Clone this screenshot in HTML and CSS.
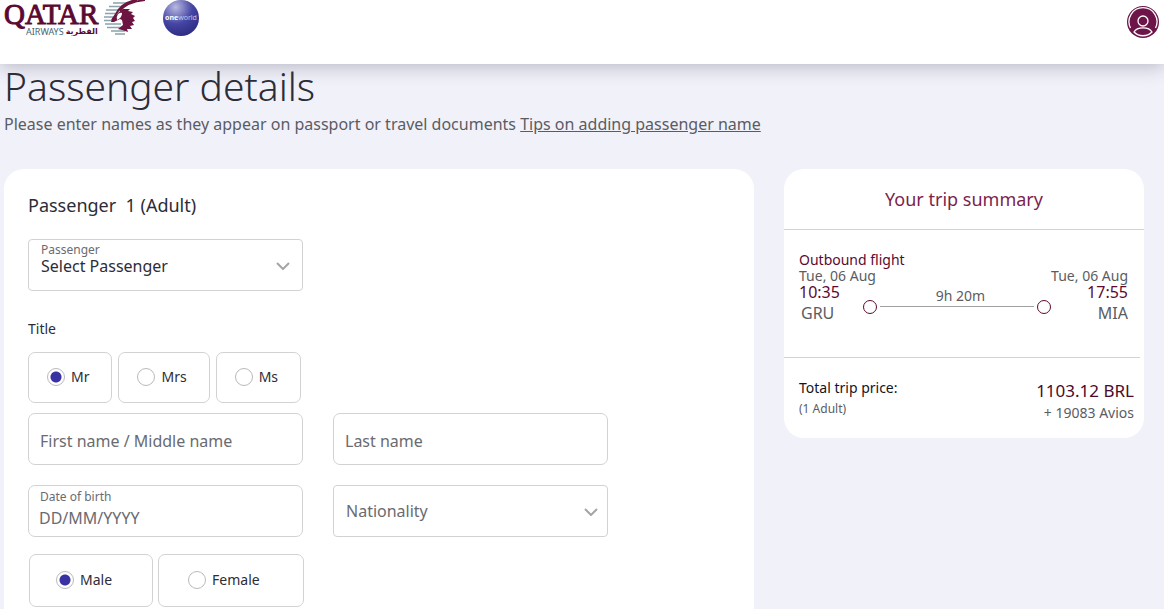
FILE: index.html
```html
<!DOCTYPE html>
<html lang="en">
<head>
    <meta charset="UTF-8">
    <meta name="viewport" content="width=device-width, initial-scale=1.0">
    <title>Passenger details</title>
    <link rel="stylesheet" href="styles.css">
</head>
<body>
    <header class="header">
        <a class="brand" href="#">
            <span class="brand-text">
                <span class="brand-name">QATAR</span>
                <span class="brand-sub"><span>AIRWAYS</span><span class="brand-arabic" lang="ar">القطرية</span></span>
            </span>
            <svg class="oryx" width="44" height="36" viewBox="0 0 44 36" aria-hidden="true">
                <path d="M12 3h15M8 6.500h14M5 10h13M4 13.500h11M3 17h9M3 20.500h10M4 24h16M6 27.500h16M10 31h14M14 34h10" stroke="#8ba3ac" stroke-width="1.500" fill="none"/>
                <path d="M18 12L22 9L29 9L27 11L32 12L30 14L34 16L32 18L34 21L31 22L33 25L29 26L31 29L26 29L27 32L21 30L17 29L22 25L21 20L19 19L13 22L10 22L11 19Z" fill="#6b1540"/>
                <path d="M17 14Q20 12 21 13Q21 18 16 20Q15 17 17 14Z" fill="#fff"/>
                <path d="M44 0C34 1 24 4 19 11M36 0C27 1 19 6 15 14L11 20" stroke="#6b1540" stroke-width="1.800" fill="none"/>
            </svg>
        </a>
        <a class="oneworld" href="#"><b>one</b>world</a>
        <button class="profile" type="button" aria-label="Profile">
            <svg width="32" height="32" viewBox="0 0 32 32" aria-hidden="true">
                <circle cx="16" cy="16" r="16" fill="#6d1548"/>
                <g fill="none" stroke="#fff" stroke-width="1.300">
                    <path d="M3.500 22A14 14 0 1 1 28.500 22"/>
                    <circle cx="16" cy="15" r="5"/>
                    <path d="M7 26C10 20.500 22 20.500 25 26C20 31 12 31 7 26Z"/>
                </g>
            </svg>
        </button>
    </header>

    <main class="page">
        <h1>Passenger details</h1>
        <p class="intro">Please enter names as they appear on passport or travel documents <a href="#">Tips on adding passenger name</a></p>

        <div class="columns">
            <form class="card passenger">
                <h2>Passenger&nbsp; 1 (Adult)</h2>
                <div class="fields">
                    <div class="field field-select">
                        <label for="passenger">Passenger</label>
                        <select id="passenger">
                            <option>Select Passenger</option>
                        </select>
                        <svg class="chevron" width="14" height="8" viewBox="0 0 14 8" aria-hidden="true"><path d="M1 1l6 6 6-6"/></svg>
                    </div>
                </div>

                <fieldset class="choices titles">
                    <legend>Title</legend>
                    <label><input type="radio" name="title" checked>Mr</label>
                    <label><input type="radio" name="title">Mrs</label>
                    <label><input type="radio" name="title">Ms</label>
                </fieldset>

                <div class="fields">
                    <div class="field">
                        <input type="text" id="first" placeholder="First name / Middle name" aria-label="First name / Middle name">
                    </div>
                    <div class="field">
                        <input type="text" id="last" placeholder="Last name" aria-label="Last name">
                    </div>
                    <div class="field field-date">
                        <label for="dob">Date of birth</label>
                        <input type="text" id="dob" placeholder="DD/MM/YYYY">
                    </div>
                    <div class="field field-select nationality">
                        <select id="nationality" aria-label="Nationality">
                            <option>Nationality</option>
                        </select>
                        <svg class="chevron" width="14" height="8" viewBox="0 0 14 8" aria-hidden="true"><path d="M1 1l6 6 6-6"/></svg>
                    </div>
                </div>

                <fieldset class="choices gender" aria-label="Gender">
                    <label><input type="radio" name="gender" checked>Male</label>
                    <label><input type="radio" name="gender">Female</label>
                </fieldset>
            </form>

            <aside class="card summary">
                <h2>Your trip summary</h2>
                <section class="flight">
                    <h3>Outbound flight</h3>
                    <div class="route">
                        <div class="stop">
                            <span>Tue, 06 Aug</span>
                            <span class="time">10:35</span>
                            <span class="airport">GRU</span>
                        </div>
                        <div class="leg">
                            <span class="duration">9h 20m</span>
                            <span class="line"></span>
                        </div>
                        <div class="stop arrival">
                            <span>Tue, 06 Aug</span>
                            <span class="time">17:55</span>
                            <span class="airport">MIA</span>
                        </div>
                    </div>
                </section>
                <section class="total">
                    <div>
                        <div class="total-label">Total trip price:</div>
                        <div class="adults">(1 Adult)</div>
                    </div>
                    <div class="amount">
                        <div class="price">1103.12 BRL</div>
                        <div class="avios">+ 19083 Avios</div>
                    </div>
                </section>
            </aside>
        </div>
    </main>
</body>
</html>
```
FILE: styles.css
```css
* {
    box-sizing: border-box;
}
body {
    display: flex;
    flex-direction: column;
    min-height: 100vh;
    margin: 0;
    background-color: #f1f1fa;
    color: #2c2d38;
    font-family: "Noto Sans", sans-serif;
    font-size: 14px;
    line-height: 20px;
}
h1, h2, h3, p {
    margin: 0;
    font-weight: 400;
}
.header {
    display: flex;
    align-items: flex-start;
    height: 64px;
    padding: 0 5px 0 4px;
    background-color: #fff;
    box-shadow: 0 2px 18px rgba(40, 40, 60, 0.3);
}
.brand {
    display: flex;
    color: #5c0931;
    text-decoration: none;
}
.brand-text {
    display: flex;
    flex-direction: column;
    width: 97px;
}
.brand-name {
    font-family: "Liberation Serif", serif;
    font-size: 29px;
    line-height: 28px;
    -webkit-text-stroke: 1px #5c0931;
}
.brand-sub {
    display: flex;
    gap: 2px;
    padding-left: 22px;
    color: #4b6470;
    font-size: 9px;
    line-height: 8px;
    white-space: nowrap;
}
.brand-arabic {
    color: #5c0931;
    font-family: "DejaVu Sans", sans-serif;
    font-size: 8px;
    font-weight: 700;
}
.oneworld {
    width: 36px;
    height: 36px;
    margin-left: 18px;
    border-radius: 50%;
    background: radial-gradient(circle at 35% 20%, #b9b9e2, #4545a4 45%, #20206f);
    color: #c5c5e8;
    font-size: 7px;
    line-height: 35px;
    text-align: center;
    text-decoration: none;
}
.oneworld b {
    color: #fff;
}
.profile {
    width: 32px;
    height: 32px;
    margin: 6px 0 0 auto;
    padding: 0;
    border: 0;
    background: none;
}
.page {
    display: flex;
    flex: 1;
    flex-direction: column;
    padding: 0 20px 0 4px;
}
.page h1 {
    margin-bottom: 4px;
    font-size: 39px;
    font-weight: 300;
    line-height: 44px;
}
.intro {
    color: #5b5c62;
    font-size: 16px;
    line-height: 24px;
}
.intro a {
    color: inherit;
}
.columns {
    display: grid;
    flex: 1;
    grid-template-columns: minmax(0, 1fr) 360px;
    gap: 30px;
    margin-top: 33px;
}
.card {
    border-radius: 20px;
    background-color: #fff;
}
.passenger {
    padding: 24px 24px 0;
    border-radius: 20px 20px 0 0;
}
.passenger h2 {
    margin-bottom: 22px;
    font-size: 18px;
    line-height: 24px;
}
.fields {
    display: grid;
    grid-template-columns: 1fr 1fr;
    gap: 20px 30px;
    max-width: 580px;
}
.field {
    position: relative;
    display: flex;
    flex-direction: column;
    height: 52px;
    border: 1px solid #d2d2d2;
    border-radius: 7px;
}
.field-select {
    border-radius: 4px;
}
.field label {
    padding: 2px 12px 0;
    color: #6a6b70;
    font-size: 12px;
    line-height: 16px;
}
.field input,
.field select {
    flex: 1;
    width: 100%;
    min-height: 0;
    padding: 3px 11px 0;
    border: 0;
    background: none;
    color: #2c2d38;
    font: inherit;
    font-size: 16px;
    appearance: none;
    outline: none;
}
.field input::placeholder {
    color: #6a6b70;
    opacity: 1;
}
.field-date label {
    padding: 3px 11px 0;
}
.field-date input {
    padding: 0 10px 5px;
}
.field-select select {
    flex: none;
    height: 24px;
    margin-top: -4px;
    padding: 0 12px;
}
.nationality select {
    flex: 1;
    margin-top: 0;
    color: #6a6b70;
}
.chevron {
    position: absolute;
    top: 22px;
    right: 12px;
    fill: none;
    stroke: #a4a4a4;
    stroke-width: 2;
    pointer-events: none;
}
.nationality .chevron {
    right: 9px;
}
.choices {
    display: flex;
    gap: 6px;
    margin: 0;
    padding: 0;
    border: 0;
}
.titles {
    margin: 28px 0 10px;
}
.titles legend {
    margin-bottom: 13px;
    padding: 0;
}
.choices label {
    display: flex;
    align-items: center;
    height: 51px;
    padding: 0 22px 2px 18px;
    border: 1px solid #d2d2d2;
    border-radius: 7px;
}
.choices input {
    width: 18px;
    height: 18px;
    margin: 0 6px 0 0;
    border: 1px solid #bababa;
    border-radius: 50%;
    background-color: #fff;
    appearance: none;
}
.choices input:checked {
    background: radial-gradient(circle, #3932a3 5px, #fff 6px);
}
.gender {
    gap: 5px;
    margin: 17px 0 2px 1px;
}
.gender label {
    height: 53px;
    padding: 0 40px 1px 26px;
}
.gender label:last-child {
    padding: 0 43px 1px 29px;
}
.summary {
    align-self: start;
}
.summary h2 {
    height: 61px;
    border-bottom: 1px solid #d2d2d2;
    color: #7a1f50;
    font-size: 18px;
    line-height: 60px;
    text-align: center;
}
.flight {
    height: 128px;
    margin-right: 4px;
    padding: 22px 12px 0 15px;
    border-bottom: 1px solid #d2d2d2;
    color: #5b5c62;
    line-height: 16px;
}
.flight h3 {
    color: #5c0931;
    font-size: 14px;
    line-height: 16px;
}
.route {
    display: flex;
}
.stop {
    display: flex;
    flex-direction: column;
    width: 80px;
    white-space: nowrap;
}
.arrival {
    text-align: right;
}
.time,
.airport {
    font-size: 16px;
}
.time {
    color: #5c0931;
}
.airport {
    padding: 0 2px;
    line-height: 26px;
}
.arrival .airport {
    padding: 0;
}
.leg {
    display: flex;
    flex: 1;
    flex-direction: column;
    padding: 20px 14px 0 0;
    text-align: center;
}
.duration {
    padding-left: 8px;
}
.line {
    position: relative;
    height: 1px;
    margin: 2px 0 0 1px;
    background-color: #a0a0a0;
}
.line::before,
.line::after {
    position: absolute;
    top: -6px;
    width: 12px;
    height: 12px;
    border: 1px solid #5c0931;
    border-radius: 50%;
    content: "";
}
.line::before {
    right: 100%;
    margin-right: 3px;
}
.line::after {
    left: 100%;
    margin-left: 3px;
}
.total {
    display: flex;
    justify-content: space-between;
    padding: 20px 10px 14px 15px;
}
.total-label {
    color: #14141c;
}
.adults {
    margin-top: 1px;
    color: #5b5c62;
    font-size: 12px;
}
.amount {
    text-align: right;
}
.price {
    color: #4d082b;
    font-size: 17px;
    line-height: 25px;
}
.avios {
    margin-bottom: 1px;
    color: #5b5c62;
}
```
